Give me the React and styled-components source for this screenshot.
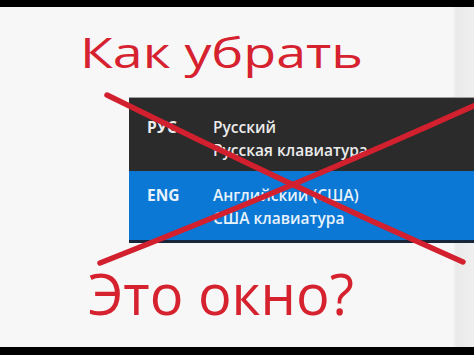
import React from "react";
import styled, { createGlobalStyle } from "styled-components";

const GlobalStyle = createGlobalStyle`
  html, body {
    margin: 0;
    padding: 0;
    background: #000;
  }
`;

const Frame = styled.div`
  position: relative;
  width: 474px;
  height: 355px;
  box-sizing: border-box;
  padding: 7px 0 8px;
  background: #000;
  overflow: hidden;
`;

const Screen = styled.div`
  height: 100%;
  display: flex;
  flex-direction: column;
  background: linear-gradient(to right, #f7f7f7 0, #f7f7f7 453px, #eaeaea 456px, #efefef 474px);
  font-family: "Open Sans", "Noto Sans", sans-serif;
`;

const Caption = styled.div`
  color: #d6212e;
  font-size: ${(p) => p.size}px;
  line-height: 1;
  margin-top: ${(p) => p.top}px;
  margin-left: ${(p) => p.left}px;
  transform: scaleX(${(p) => p.stretch || 1});
  transform-origin: left center;
  white-space: nowrap;
`;

const LangPanel = styled.div`
  margin-top: 24px;
  margin-left: 129px;
  border-top: 1px solid #a0a0a0;
  border-bottom: 3px solid #17263a;
  display: flex;
  flex-direction: column;
`;

const LangRow = styled.div`
  display: grid;
  grid-template-columns: 66px 1fr;
  padding: ${(p) => (p.active ? "13px 0 10px 18px" : "18px 0 9px 18px")};
  background: ${(p) => (p.active ? "#0a78d4" : "#2b2b2b")};
  color: ${(p) => (p.active ? "#e8f2fb" : "#ececec")};
  font-size: 15.5px;
  font-weight: 600;
  line-height: 23px;
`;

const LangCode = styled.div`
  font-weight: 700;
`;

const LangName = styled.div`
  display: flex;
  flex-direction: column;
`;

const CrossMark = styled.svg`
  position: absolute;
  left: 0;
  top: 0;
  pointer-events: none;
`;

const langs = [
  { code: "РУС", name: "Русский", layout: "Русская клавиатура" },
  { code: "ENG", name: "Английский (США)", layout: "США клавиатура", active: true },
];

export default function App() {
  return (
    <>
      <GlobalStyle />
      <Frame>
        <Screen>
          <Caption size={42} top={24} left={80} stretch={1.28}>
            Как убрать
          </Caption>
          <LangPanel>
            {langs.map((l) => (
              <LangRow key={l.code} active={l.active}>
                <LangCode>{l.code}</LangCode>
                <LangName>
                  <span>{l.name}</span>
                  <span>{l.layout}</span>
                </LangName>
              </LangRow>
            ))}
          </LangPanel>
          <Caption size={56} top={22} left={88}>
            Это окно?
          </Caption>
        </Screen>
        <CrossMark width="474" height="355" viewBox="0 0 474 355">
          <g fill="none" stroke="#d3202f" strokeWidth="5.5" strokeLinecap="round">
            <path d="M107 95 Q 282 182 463 262" />
            <path d="M100 263 Q 296 186 478 104" />
          </g>
        </CrossMark>
      </Frame>
    </>
  );
}
